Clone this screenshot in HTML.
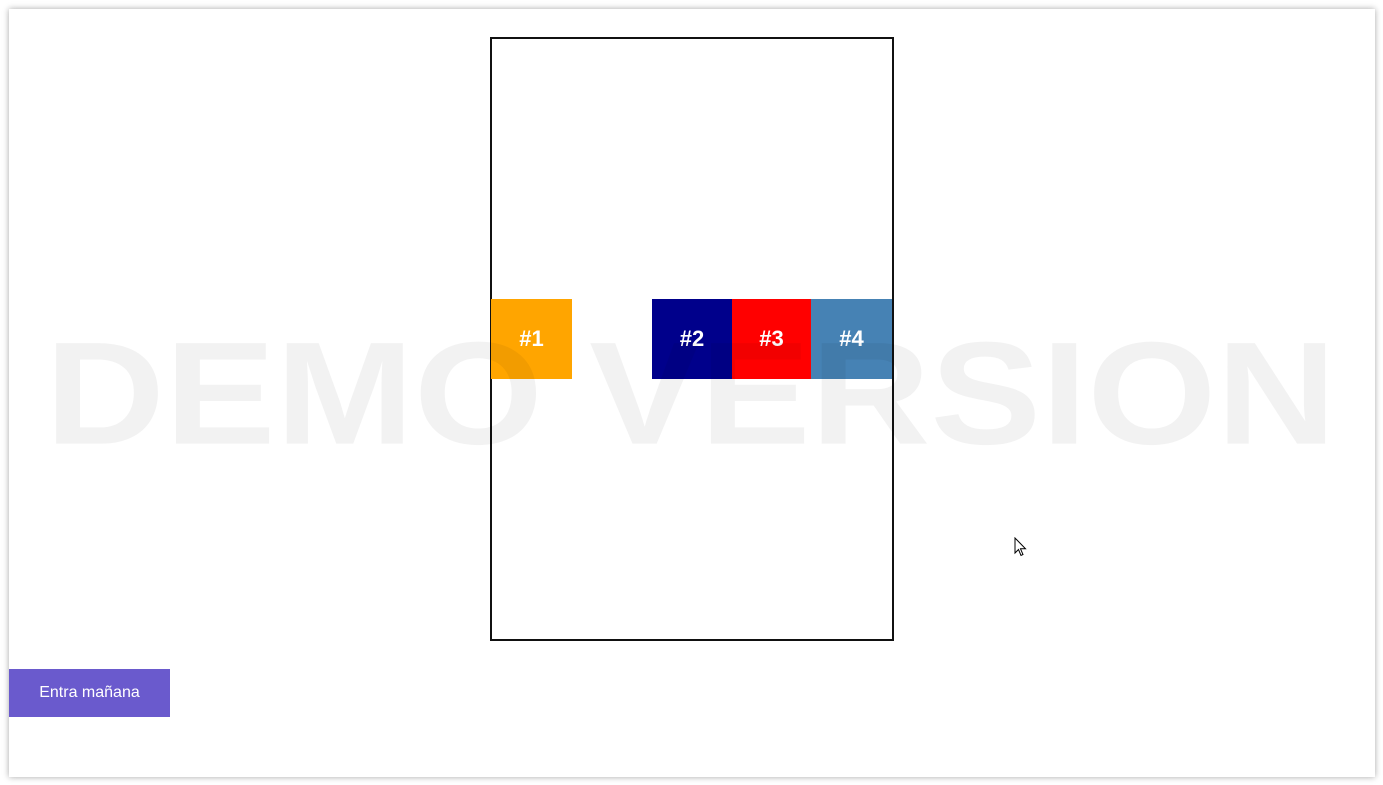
<!DOCTYPE html>
<html><head><style>
html,body{margin:0;padding:0;width:1383px;height:785px;background:#fff;overflow:hidden;font-family:"Liberation Sans",Arial,sans-serif;}
.card{position:absolute;left:9px;top:9px;width:1366px;height:768px;background:#fff;box-shadow:0 0 6px rgba(0,0,0,0.35);}
.frame{position:absolute;left:490px;top:37px;width:400px;height:600px;border:2px solid #111;}
.b{position:absolute;top:299px;height:80px;color:#fff;font-weight:bold;font-size:22px;display:flex;align-items:center;justify-content:center;}
.wm{position:absolute;left:45px;top:294px;font-weight:bold;font-size:166px;line-height:190px;color:rgba(0,0,0,0.05);white-space:nowrap;transform:scaleY(0.88);transform-origin:0 140px;}
.btn{position:absolute;left:9px;top:669px;width:161px;height:48px;background:#6a5acd;color:#fff;font-size:16px;display:flex;align-items:center;justify-content:center;}
</style></head><body>
<div class="card"></div>
<div class="frame"></div>
<div class="b" style="left:491px;width:81px;background:#ffa500">#1</div>
<div class="b" style="left:652px;width:80px;background:#00008b">#2</div>
<div class="b" style="left:732px;width:79px;background:#ff0000">#3</div>
<div class="b" style="left:811px;width:81px;background:#4682b4">#4</div>
<div class="wm">DEMO VERSION</div>
<div class="btn">Entra mañana</div>
<svg style="position:absolute;left:1014px;top:537px" width="14" height="20" viewBox="0 0 14 20"><path d="M1 1 L1 16 L4.5 12.5 L7 18.5 L9 17.5 L6.5 11.8 L11.5 11.8 Z" fill="#fff" stroke="#000" stroke-width="1"/></svg>
</body></html>
